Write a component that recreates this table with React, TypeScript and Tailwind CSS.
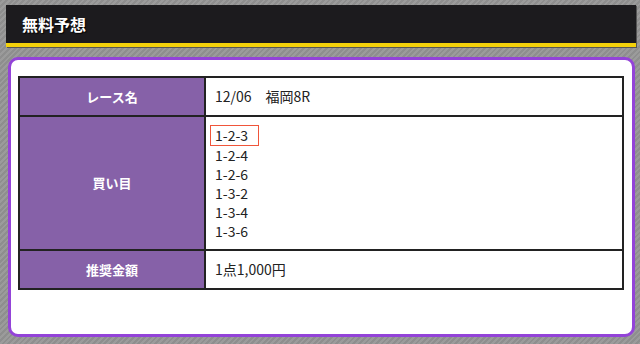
export default function App() {
  const picks = ["1-2-3", "1-2-4", "1-2-6", "1-3-2", "1-3-4", "1-3-6"];
  const font = { fontFamily: '"Noto Sans CJK JP", "Noto Sans", sans-serif' };
  return (
    <div
      className="w-[640px] h-[344px] overflow-hidden flex flex-col bg-[repeating-linear-gradient(135deg,#8e8e8e_0px,#8e8e8e_2px,#9b9b9b_2px,#9b9b9b_4px)]"
      style={font}
    >
      {/* title bar */}
      <div className="ml-[6px] mt-[5px] w-[630px] h-[42px] bg-[#1c1b1e] border-b-4 border-[#f3d10a] shadow-[1px_1px_0_#555] flex items-center pl-[16px]">
        <h2 className="text-white text-[16px] font-bold leading-none [text-shadow:1px_1px_1px_#000]">
          無料予想
        </h2>
      </div>

      {/* card */}
      <div className="ml-[8px] mt-[10px] w-[627px] h-[280px] bg-white border-[3px] border-[#9343d8] rounded-[10px] pl-[7px] pt-[16px]">
        <table className="w-[606px] border-collapse border-2 border-[#222] text-[14px] text-[#222]">
          <tbody>
            <tr className="h-[39px]">
              <th className="w-[186px] border-2 border-[#222] bg-[#8661a8] text-white text-[13px] font-bold">
                レース名
              </th>
              <td className="border-2 border-[#222] pl-[9px]">12/06　福岡8R</td>
            </tr>
            <tr className="h-[134px]">
              <th className="border-2 border-[#222] bg-[#8661a8] text-white text-[13px] font-bold">
                買い目
              </th>
              <td className="border-2 border-[#222] pl-[4px] py-[6px]">
                <div className="flex flex-col items-start">
                  {picks.map((p, i) => (
                    <span
                      key={p}
                      className={
                        i === 0
                          ? "h-[21px] leading-[19px] pl-[4px] border border-[#f0553a] w-[49px]"
                          : "h-[19.2px] leading-[19px] pl-[5px]"
                      }
                    >
                      {p}
                    </span>
                  ))}
                </div>
              </td>
            </tr>
            <tr className="h-[39px]">
              <th className="border-2 border-[#222] bg-[#8661a8] text-white text-[13px] font-bold">
                推奨金額
              </th>
              <td className="border-2 border-[#222] pl-[9px]">1点1,000円</td>
            </tr>
          </tbody>
        </table>
      </div>
    </div>
  );
}
